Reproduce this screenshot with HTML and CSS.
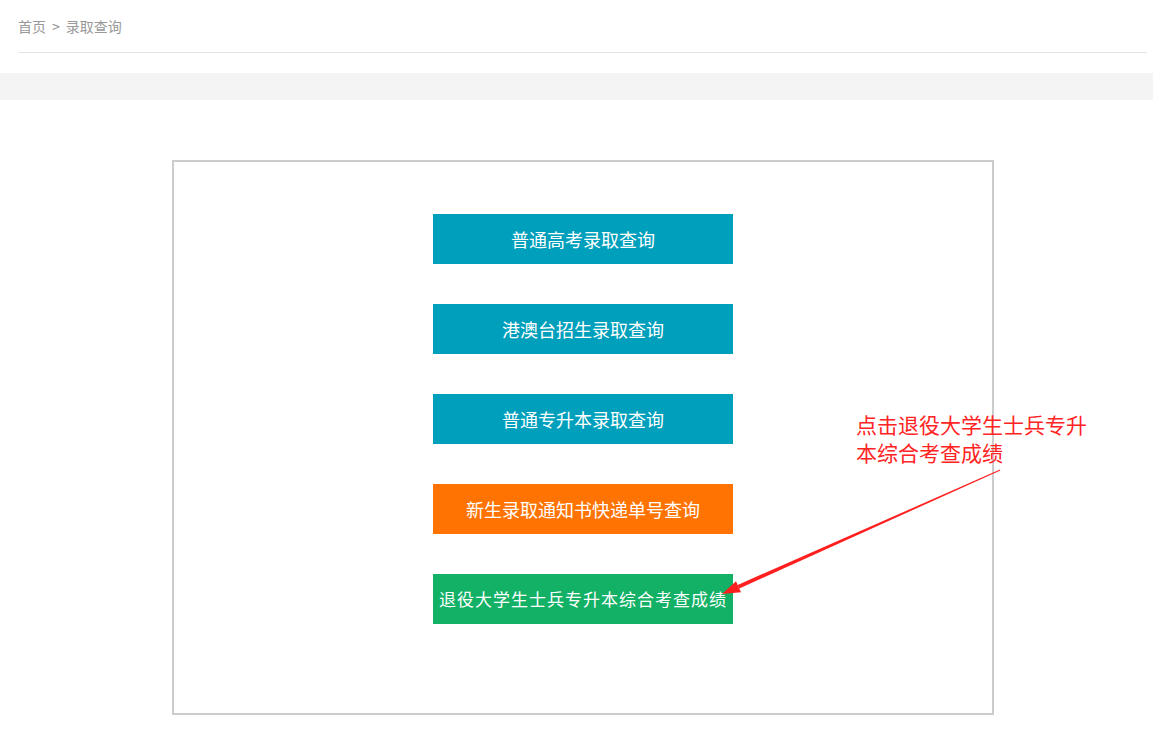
FILE: index.html
```html
<!DOCTYPE html>
<html lang="zh-CN">
<head>
  <meta charset="UTF-8" />
  <title>录取查询</title>
  <link rel="stylesheet" href="styles.css">
</head>
<body>

  <div class="crumbs">
    <a href="#">首页</a><span class="sep">&gt;</span><span>录取查询</span>
  </div>

  <div class="band"></div>

  <div class="panel">
    <a class="btn btn-blue" href="#">普通高考录取查询</a>
    <a class="btn btn-blue" href="#">港澳台招生录取查询</a>
    <a class="btn btn-blue" href="#">普通专升本录取查询</a>
    <a class="btn btn-orange" href="#">新生录取通知书快递单号查询</a>
    <a class="btn btn-green btn-long" href="#">退役大学生士兵专升本综合考查成绩</a>
  </div>

  <div class="note">点击退役大学生士兵专升<br>本综合考查成绩</div>

  <svg class="arrow" width="1153" height="731" viewBox="0 0 1153 731">
    <polygon fill="#ff1f1f" points="1000,469.6 1000.3,470.4 739.3,588.5 737.7,584.9" />
    <polygon fill="#ff1f1f" points="722,594 736,581.2 741,592.2" />
  </svg>

</body>
</html>
```

FILE: styles.css
```css
html, body {
  margin: 0;
  padding: 0;
}

body {
  font-family: "Noto Sans CJK SC", "Noto Sans", sans-serif;
  background: #fff;
  position: relative;
  min-height: 731px;
}

.crumbs {
  margin: 0 6px 0 18px;
  height: 52px;
  line-height: 52px;
  font-size: 14px;
  color: #999;
  border-bottom: 1px solid #e5e5e5;
}

.crumbs a {
  color: #999;
  text-decoration: none;
}

.crumbs .sep {
  margin: 0 6px;
  color: #888;
}

.band {
  margin-top: 20px;
  height: 27px;
  background: #f4f4f4;
}

.panel {
  width: 818px;
  height: 499px;
  margin: 60px 0 0 172px;
  padding-top: 52px;
  border: 2px solid #ccc;
  display: flex;
  flex-direction: column;
  align-items: center;
  gap: 40px;
}

.btn {
  display: block;
  width: 300px;
  height: 50px;
  line-height: 50px;
  text-align: center;
  font-size: 18px;
  color: #fff;
  text-decoration: none;
  white-space: nowrap;
}

.btn-blue {
  background: #009fbc;
}

.btn-orange {
  background: #ff7302;
}

.btn-green {
  background: #12b166;
}

.btn-long {
  font-size: 17px;
  letter-spacing: 1px;
}

.note {
  position: absolute;
  left: 856px;
  top: 410px;
  font-size: 21px;
  line-height: 28px;
  color: #ff2424;
}

.arrow {
  position: absolute;
  left: 0;
  top: 0;
  pointer-events: none;
}
```
